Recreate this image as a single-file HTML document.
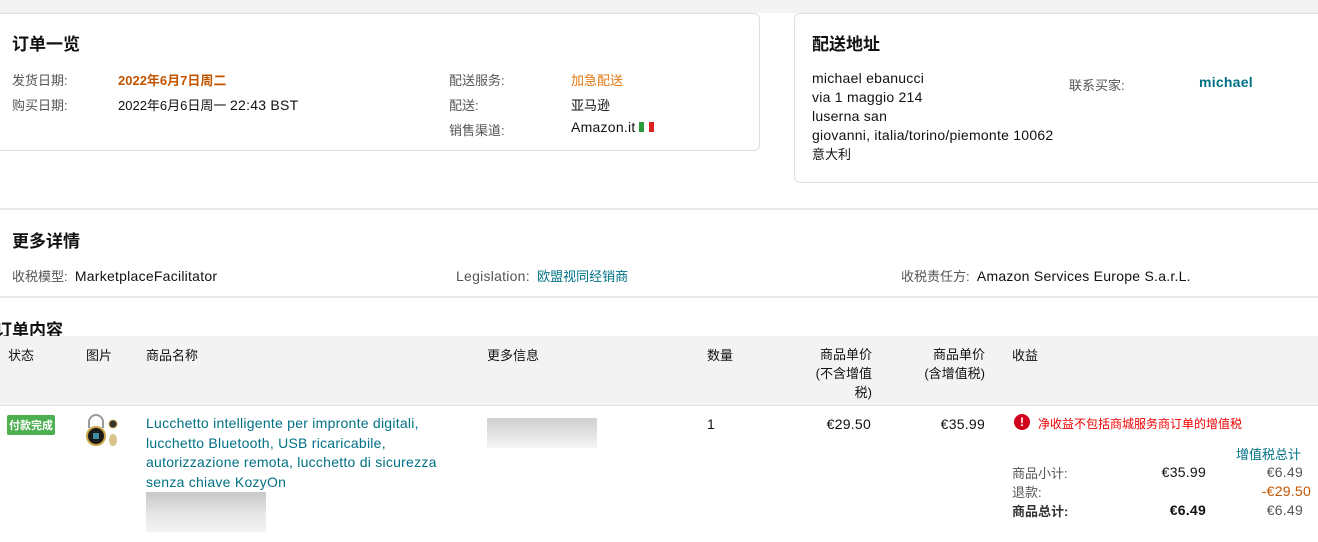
<!DOCTYPE html>
<html><head><meta charset="utf-8"><style>
*{margin:0;padding:0;box-sizing:border-box}
body{width:1318px;height:542px;overflow:hidden;background:#fff;font-family:"Liberation Sans","Noto Sans CJK SC",sans-serif;font-size:13px;color:#111;position:relative}
.a{position:absolute;white-space:nowrap}
.l{font-size:14px;letter-spacing:0.25px}
.g{color:#555}
.t{color:#007185}
.o{color:#c45500}
.h{font-size:17px;font-weight:bold}
.card{position:absolute;border:1px solid #ddd;border-radius:6px;background:#fff}
.line{position:absolute;left:0;width:1318px;height:2px;background:#e7e7e7}
</style></head><body>
<div class="a" style="left:0;top:0;width:1318px;height:13px;background:#f3f3f3"></div>
<div class="card" style="left:-10px;top:13px;width:770px;height:138px"></div>
<div class="card" style="left:794px;top:13px;width:540px;height:170px"></div>
<div class="a h" style="left:12px;top:30px">订单一览</div>
<div class="a g" style="left:12px;top:70px">发货日期:</div>
<div class="a o" style="left:118px;top:70px;font-weight:bold">2022年6月7日周二</div>
<div class="a g" style="left:12px;top:95px">购买日期:</div>
<div class="a" style="left:118px;top:95px">2022年6月6日周一 <span class="l">22:43 BST</span></div>
<div class="a g" style="left:449px;top:70px">配送服务:</div>
<div class="a" style="left:571px;top:70px;color:#e47911">加急配送</div>
<div class="a g" style="left:449px;top:95px">配送:</div>
<div class="a" style="left:571px;top:95px">亚马逊</div>
<div class="a g" style="left:449px;top:120px">销售渠道:</div>
<div class="a" style="left:571px;top:119px"><span class="l">Amazon.it</span> <span style="display:inline-block;width:15px;height:10px;background:linear-gradient(90deg,#2a9a3a 33%,#fff 33% 66%,#d22 66%);vertical-align:0"></span></div>
<div class="a h" style="left:812px;top:30px">配送地址</div>
<div class="a l" style="left:812px;top:69px;line-height:19px">michael ebanucci<br>via 1 maggio 214<br>luserna san<br>giovanni, italia/torino/piemonte 10062<br><span style="font-size:13px;letter-spacing:0">意大利</span></div>
<div class="a g" style="left:1069px;top:75px">联系买家:</div>
<div class="a t l" style="left:1199px;top:74px;font-weight:bold">michael</div>
<div class="line" style="top:208px"></div>
<div class="a h" style="left:12px;top:227px">更多详情</div>
<div class="a" style="left:12px;top:266px"><span class="g">收税模型:</span>&nbsp; <span class="l">MarketplaceFacilitator</span></div>
<div class="a" style="left:456px;top:266px"><span class="g l">Legislation:</span>&nbsp; <span class="t">欧盟视同经销商</span></div>
<div class="a" style="left:901px;top:266px"><span class="g">收税责任方:</span>&nbsp; <span class="l">Amazon Services Europe S.a.r.L.</span></div>
<div class="line" style="top:296px"></div>
<div class="a h" style="left:-5px;top:316px">订单内容</div>
<div class="a" style="left:0;top:336px;width:1318px;height:70px;background:#f3f3f3;border-bottom:1px solid #e3e3e3"></div>
<div class="a" style="left:8px;top:345px">状态</div>
<div class="a" style="left:86px;top:345px">图片</div>
<div class="a" style="left:146px;top:345px">商品名称</div>
<div class="a" style="left:487px;top:345px">更多信息</div>
<div class="a" style="left:707px;top:345px">数量</div>
<div class="a" style="left:800px;top:345px;text-align:right;width:72px;white-space:normal;line-height:19px">商品单价<br>(不含增值<br>税)</div>
<div class="a" style="left:905px;top:345px;text-align:right;width:80px;line-height:19px">商品单价<br>(含增值税)</div>
<div class="a" style="left:1012px;top:345px">收益</div>
<div class="a" style="left:7px;top:415px;background:#4caf50;color:#fff;font-size:11px;font-weight:bold;padding:2px 2px;border-radius:2px">付款完成</div>
<svg class="a" style="left:84px;top:413px" width="40" height="36" viewBox="0 0 40 36"><path d="M5 15V9a7 7 0 0 1 14 0v6" fill="none" stroke="#999" stroke-width="2"/><circle cx="12" cy="23" r="9" fill="#1a1a1a" stroke="#c9a54a" stroke-width="2"/><rect x="9" y="20" width="6" height="6" fill="#3b8fa0"/><circle cx="29" cy="11" r="4" fill="#333" stroke="#c9a54a"/><ellipse cx="29" cy="27" rx="4" ry="6" fill="#d8c48a"/></svg>
<div class="a t l" style="left:146px;top:414px;line-height:19.5px">Lucchetto intelligente per impronte digitali,<br>lucchetto Bluetooth, USB ricaricabile,<br>autorizzazione remota, lucchetto di sicurezza<br>senza chiave KozyOn</div>
<div class="a" style="left:146px;top:492px;width:120px;height:40px;background:linear-gradient(#c8c8c8,#e8e8e8 60%,#f3f3f3)"></div>
<div class="a" style="left:487px;top:418px;width:110px;height:30px;background:linear-gradient(#cfcfcf,#e6e6e6 60%,#f5f5f5)"></div>
<div class="a l" style="left:707px;top:416px">1</div>
<div class="a l" style="left:790px;top:416px;width:81px;text-align:right">€29.50</div>
<div class="a l" style="left:895px;top:416px;width:90px;text-align:right">€35.99</div>
<div class="a" style="left:1014px;top:414px;width:16px;height:16px;border-radius:50%;background:#d0021b;color:#fff;font-weight:bold;font-size:12px;text-align:center;line-height:16px">!</div>
<div class="a" style="left:1038px;top:415px;color:#e00;font-size:12px">净收益不包括商城服务商订单的增值税</div>
<div class="a t" style="left:1236px;top:444px">增值税总计</div>
<div class="a g" style="left:1012px;top:464px;line-height:19px">商品小计:<br>退款:<br><b style="color:#333">商品总计:</b></div>
<div class="a l" style="left:1130px;top:463px;width:76px;text-align:right;line-height:19px">€35.99<br>&nbsp;<br><b>€6.49</b></div>
<div class="a l" style="left:1220px;top:463px;width:83px;text-align:right;line-height:19px;color:#555">€6.49<br><span class="o" style="margin-right:-8px">-€29.50</span><br>€6.49</div>
</body></html>
